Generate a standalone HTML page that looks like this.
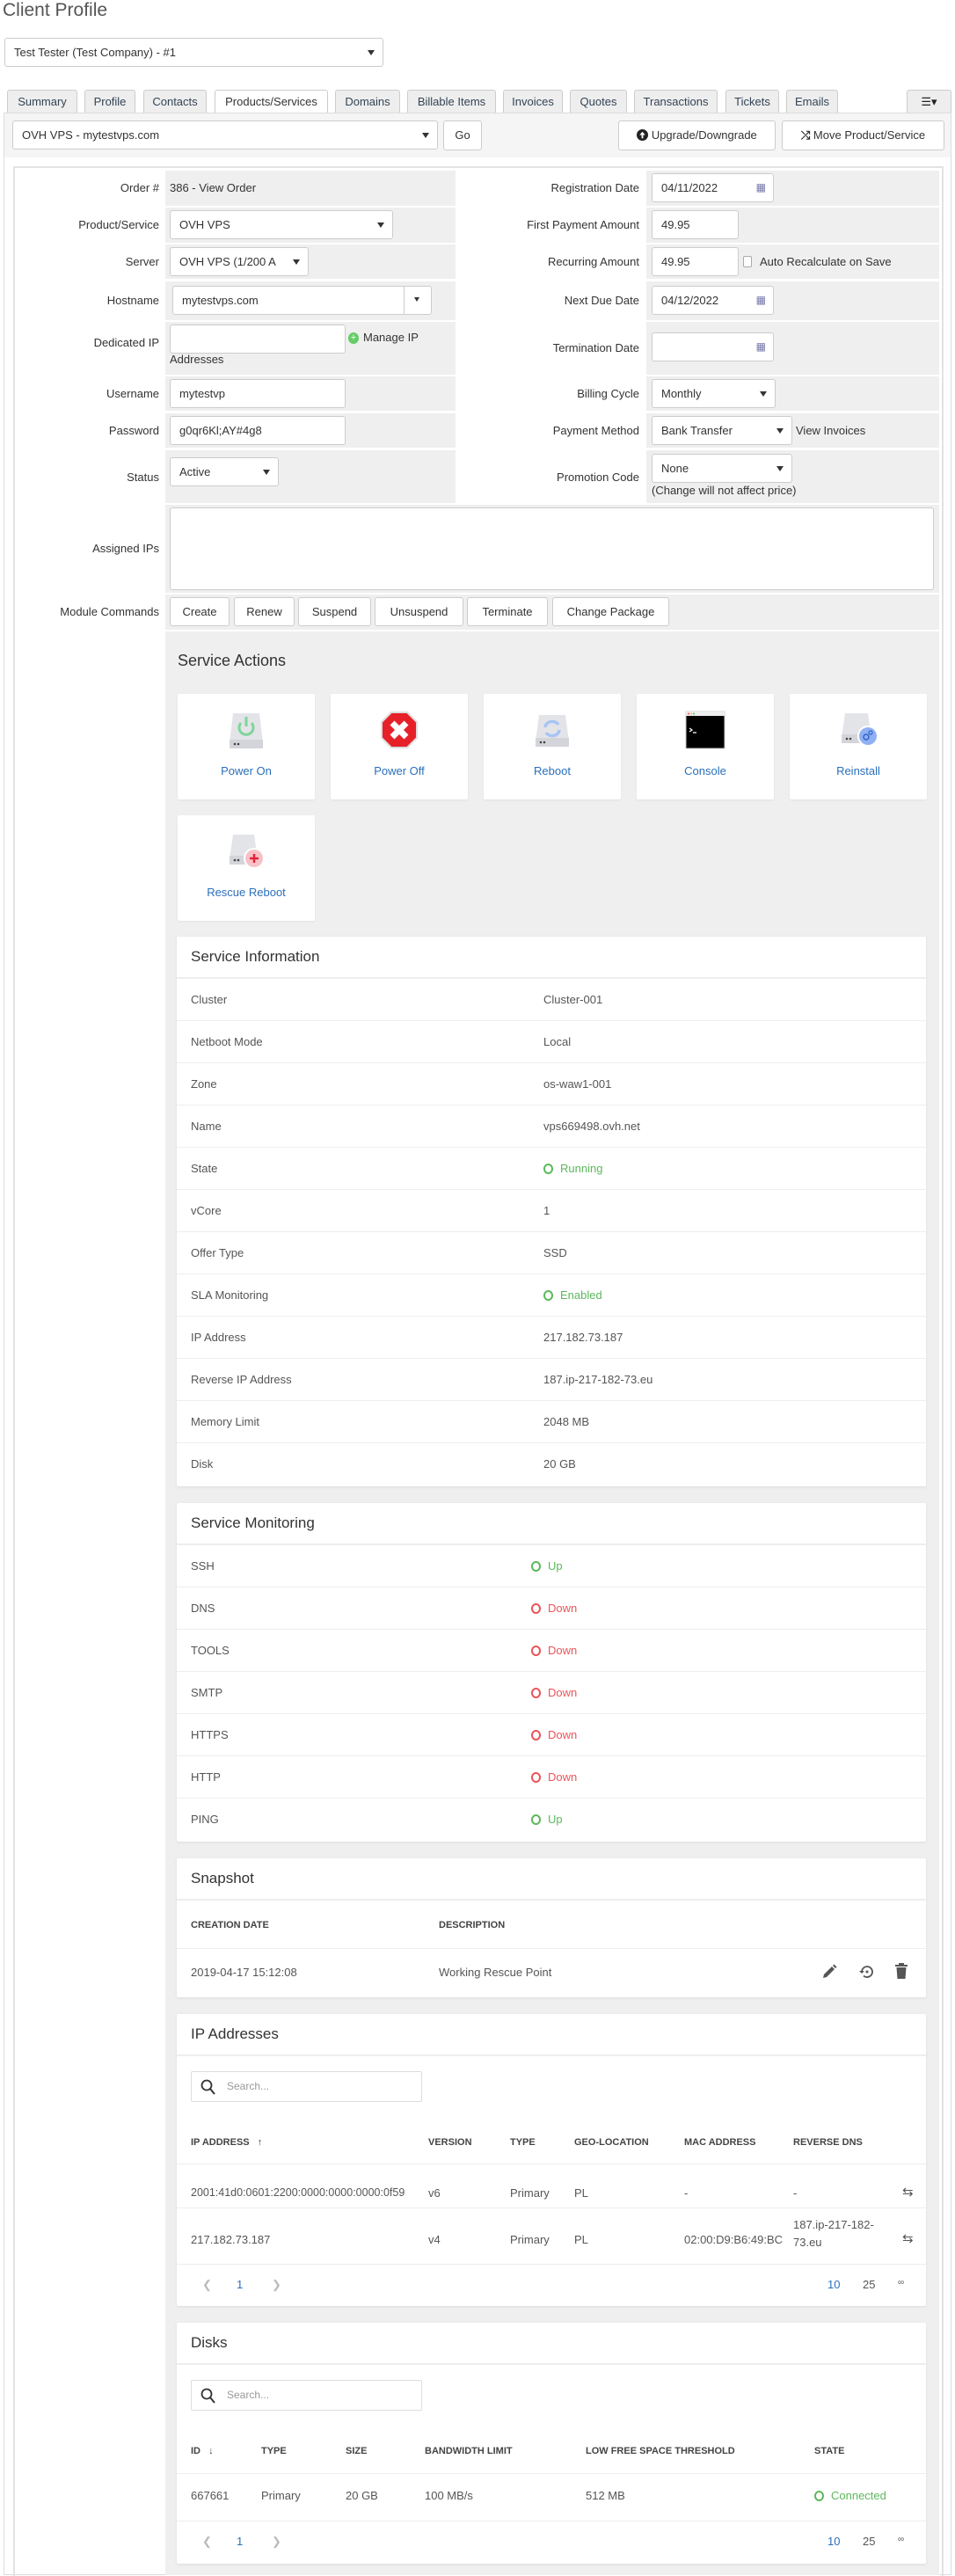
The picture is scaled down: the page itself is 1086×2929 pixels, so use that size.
<!DOCTYPE html>
<html><head><meta charset="utf-8">
<style>
*{box-sizing:border-box;margin:0;padding:0}
body{width:1086px;height:2923px;background:#fff;font-family:"Liberation Sans",sans-serif;font-size:13px;color:#333;position:relative;overflow:hidden}
.a{position:absolute}
.inp{position:absolute;background:#fff;border:1px solid #ccc;border-radius:3px;height:33px;padding:0 10px;line-height:31px;font-size:13px;color:#555;white-space:nowrap;overflow:hidden}
.sel::after{content:"";position:absolute;right:9px;top:13px;border-left:4px solid transparent;border-right:4px solid transparent;border-top:6px solid #333}
.tab{position:absolute;top:102px;height:26px;border:1px solid #ccc;border-bottom:none;border-radius:3px 3px 0 0;background:#eee;text-align:center;line-height:25px;font-size:13px;color:#345}
.lbl{position:absolute;text-align:right;width:170px;font-size:13px;color:#333}
.rl{position:absolute;text-align:right;width:200px;left:527px;font-size:13px;color:#333}
.cell{position:absolute;background:#efefef}
.btn{position:absolute;background:#fff;border:1px solid #ccc;border-radius:3px;height:34px;line-height:32px;text-align:center;font-size:13px;color:#333}
.card{position:absolute;background:#fff;box-shadow:0 1px 3px rgba(0,0,0,.08);border-radius:2px}
.act{position:absolute;top:789px;width:156px;height:120px;background:#fff;border-radius:2px;box-shadow:0 1px 2px rgba(0,0,0,.06);text-align:center}
.act span{position:absolute;left:0;right:0;top:80px;color:#2a6fba;font-size:13px}
.act svg{position:absolute;left:50%;top:18px;transform:translateX(-50%)}
.ph{height:48px;border-bottom:2px solid #eee;padding:0 16px;line-height:46px;font-size:17px;color:#333}
.row{height:48px;border-bottom:1px solid #eee;position:relative;font-size:13px;color:#555;line-height:48px}
.row:last-child{border-bottom:none}
.row b{font-weight:normal;position:absolute;left:16px}
.row i{font-style:normal;position:absolute}
.ok{color:#5cb85c}.bad{color:#e9545a}
.dot{display:inline-block;width:11px;height:12px;border:2px solid currentColor;border-radius:50%;vertical-align:-2px;margin-right:8px}
.th{font-size:11px;font-weight:bold;color:#444;position:absolute}
.srch{position:absolute;left:16px;width:263px;height:35px;border:1px solid #ddd;border-radius:2px;color:#999;font-size:12px;line-height:33px;padding-left:40px}
.pg{position:absolute;font-size:13px;color:#2a6fba}
</style></head><body>

<div class="a" style="left:3px;top:0;font-size:21px;color:#555">Client Profile</div>
<div class="inp sel" style="left:5px;top:43px;width:431px;height:33px;border-radius:3px;color:#333">Test Tester (Test Company) - #1</div>

<div class="tab" style="left:8px;width:80px">Summary</div>
<div class="tab" style="left:96px;width:58px">Profile</div>
<div class="tab" style="left:163px;width:72px">Contacts</div>
<div class="tab" style="left:244px;width:129px;background:#fff;height:27px;color:#333">Products/Services</div>
<div class="tab" style="left:381px;width:74px">Domains</div>
<div class="tab" style="left:463px;width:101px">Billable Items</div>
<div class="tab" style="left:572px;width:68px">Invoices</div>
<div class="tab" style="left:648px;width:65px">Quotes</div>
<div class="tab" style="left:721px;width:95px">Transactions</div>
<div class="tab" style="left:825px;width:61px">Tickets</div>
<div class="tab" style="left:894px;width:59px">Emails</div>
<div class="tab" style="left:1031px;width:51px;color:#222">&#9776;&#9662;</div>

<div class="a" style="left:4px;top:128px;width:1078px;height:2800px;border:1px solid #ddd;background:#fff"></div>
<div class="a" style="left:5px;top:129px;width:1076px;height:50px;background:#f5f5f5"></div>
<div class="inp sel" style="left:14px;top:137px;width:484px;color:#333">OVH VPS - mytestvps.com</div>
<div class="btn" style="left:504px;top:137px;width:44px">Go</div>
<div class="btn" style="left:703px;top:137px;width:179px"><svg width="13" height="13" viewBox="0 0 14 14" style="vertical-align:-2px"><circle cx="7" cy="7" r="7" fill="#222"/><path d="M7 3l3.5 4H8v4H6V7H3.5z" fill="#fff"/></svg> Upgrade/Downgrade</div>
<div class="btn" style="left:889px;top:137px;width:185px"><b style="font-size:13px">&#10542;</b> Move Product/Service</div>

<div class="a" style="left:15px;top:189px;width:1058px;height:2740px;border:2px solid #e3e3e3;border-bottom:none"></div>
<div class="a" style="left:188px;top:718px;width:880px;height:2210px;background:#efefef"></div>

<!-- form rows -->
<div class="cell" style="left:188px;top:194px;width:330px;height:40px"></div>
<div class="cell" style="left:735px;top:194px;width:333px;height:40px"></div>
<div class="cell" style="left:188px;top:236px;width:330px;height:40px"></div>
<div class="cell" style="left:735px;top:236px;width:333px;height:40px"></div>
<div class="cell" style="left:188px;top:278px;width:330px;height:39px"></div>
<div class="cell" style="left:735px;top:278px;width:333px;height:39px"></div>
<div class="cell" style="left:188px;top:320px;width:330px;height:44px"></div>
<div class="cell" style="left:735px;top:320px;width:333px;height:44px"></div>
<div class="cell" style="left:188px;top:366px;width:330px;height:60px"></div>
<div class="cell" style="left:735px;top:366px;width:333px;height:60px"></div>
<div class="cell" style="left:188px;top:428px;width:330px;height:39px"></div>
<div class="cell" style="left:735px;top:428px;width:333px;height:39px"></div>
<div class="cell" style="left:188px;top:470px;width:330px;height:39px"></div>
<div class="cell" style="left:735px;top:470px;width:333px;height:39px"></div>
<div class="cell" style="left:188px;top:512px;width:330px;height:60px"></div>
<div class="cell" style="left:735px;top:512px;width:333px;height:60px"></div>
<div class="cell" style="left:188px;top:574px;width:880px;height:100px"></div>
<div class="cell" style="left:188px;top:676px;width:880px;height:40px"></div>

<div class="lbl" style="left:11px;top:206px">Order #</div>
<div class="a" style="left:193px;top:206px;color:#333">386 - View Order</div>
<div class="rl" style="top:206px">Registration Date</div>
<div class="inp" style="left:741px;top:197px;width:139px;color:#333">04/11/2022<span style="position:absolute;right:8px;top:0;color:#77a;font-size:12px">&#9638;</span></div>

<div class="lbl" style="left:11px;top:248px">Product/Service</div>
<div class="inp sel" style="left:193px;top:239px;width:254px;color:#333">OVH VPS</div>
<div class="rl" style="top:248px">First Payment Amount</div>
<div class="inp" style="left:741px;top:239px;width:99px;color:#333">49.95</div>

<div class="lbl" style="left:11px;top:290px">Server</div>
<div class="inp sel" style="left:193px;top:281px;width:158px;color:#333">OVH VPS (1/200 A</div>
<div class="rl" style="top:290px">Recurring Amount</div>
<div class="inp" style="left:741px;top:281px;width:99px;color:#333">49.95</div>
<div class="a" style="left:845px;top:291px;width:10px;height:13px;border:1px solid #aaa;border-radius:2px;background:#fff"></div>
<div class="a" style="left:864px;top:290px">Auto Recalculate on Save</div>

<div class="lbl" style="left:11px;top:334px">Hostname</div>
<div class="inp" style="left:196px;top:325px;width:295px;color:#333">mytestvps.com</div>
<div class="a" style="left:459px;top:326px;width:1px;height:31px;background:#ccc"></div>
<div class="a" style="left:471px;top:338px;border-left:3px solid transparent;border-right:3px solid transparent;border-top:5px solid #333"></div>
<div class="rl" style="top:334px">Next Due Date</div>
<div class="inp" style="left:741px;top:325px;width:139px;color:#333">04/12/2022<span style="position:absolute;right:8px;top:0;color:#77a;font-size:12px">&#9638;</span></div>

<div class="lbl" style="left:11px;top:382px">Dedicated IP</div>
<div class="inp" style="left:193px;top:369px;width:200px"></div>
<div class="a" style="left:396px;top:378px;width:12px;height:13px;border-radius:50%;background:#6c6;color:#fff;font-size:11px;line-height:13px;text-align:center">+</div>
<div class="a" style="left:413px;top:376px">Manage IP</div>
<div class="a" style="left:193px;top:401px">Addresses</div>
<div class="rl" style="top:388px">Termination Date</div>
<div class="inp" style="left:741px;top:378px;width:139px"><span style="position:absolute;right:8px;top:0;color:#77a;font-size:12px">&#9638;</span></div>

<div class="lbl" style="left:11px;top:440px">Username</div>
<div class="inp" style="left:193px;top:431px;width:200px;color:#333">mytestvp</div>
<div class="rl" style="top:440px">Billing Cycle</div>
<div class="inp sel" style="left:741px;top:431px;width:141px;color:#333">Monthly</div>

<div class="lbl" style="left:11px;top:482px">Password</div>
<div class="inp" style="left:193px;top:473px;width:200px;color:#333">g0qr6Kl;AY#4g8</div>
<div class="rl" style="top:482px">Payment Method</div>
<div class="inp sel" style="left:741px;top:473px;width:160px;color:#333">Bank Transfer</div>
<div class="a" style="left:905px;top:482px">View Invoices</div>

<div class="lbl" style="left:11px;top:535px">Status</div>
<div class="inp sel" style="left:193px;top:520px;width:124px;color:#333">Active</div>
<div class="rl" style="top:535px">Promotion Code</div>
<div class="inp sel" style="left:741px;top:516px;width:160px;color:#333">None</div>
<div class="a" style="left:741px;top:550px;font-size:13px">(Change will not affect price)</div>

<div class="lbl" style="left:11px;top:616px">Assigned IPs</div>
<div class="inp" style="left:193px;top:577px;width:869px;height:94px"></div>

<div class="lbl" style="left:11px;top:688px">Module Commands</div>
<div class="btn" style="left:193px;top:679px;width:68px;height:33px">Create</div>
<div class="btn" style="left:266px;top:679px;width:69px;height:33px">Renew</div>
<div class="btn" style="left:339px;top:679px;width:83px;height:33px">Suspend</div>
<div class="btn" style="left:426px;top:679px;width:101px;height:33px">Unsuspend</div>
<div class="btn" style="left:531px;top:679px;width:92px;height:33px">Terminate</div>
<div class="btn" style="left:628px;top:679px;width:133px;height:33px">Change Package</div>

<div class="a" style="left:202px;top:741px;font-size:18px;color:#333">Service Actions</div>

<div class="act" style="left:202px"><svg width="46" height="46" viewBox="0 0 46 46"><path d="M8 4h30l4 34H4z" fill="#e3e4e8"/><rect x="4" y="34" width="38" height="10" fill="#d4d5da"/><circle cx="10" cy="39" r="1.3" fill="#444"/><circle cx="14" cy="39" r="1.3" fill="#444"/><path d="M17 15a8 8 0 1 0 12 0" stroke="#7dd59a" stroke-width="3" fill="none"/><path d="M23 8v11" stroke="#7dd59a" stroke-width="3"/></svg><span>Power On</span></div>
<div class="act" style="left:376px"><svg width="46" height="46" viewBox="0 0 46 46"><polygon points="14,3 32,3 43,14 43,32 32,43 14,43 3,32 3,14" fill="#e62129" stroke="#ddd" stroke-width="2"/><path d="M15 15l16 16M31 15L15 31" stroke="#fff" stroke-width="7"/></svg><span>Power Off</span></div>
<div class="act" style="left:550px"><svg width="46" height="46" viewBox="0 0 46 46"><path d="M8 6h30l4 30H4z" fill="#e3e4e8"/><rect x="4" y="32" width="38" height="10" fill="#d4d5da"/><circle cx="10" cy="37" r="1.3" fill="#444"/><circle cx="14" cy="37" r="1.3" fill="#444"/><path d="M15 20a8 7 0 0 1 15-3M31 23a8 7 0 0 1-15 3" stroke="#a9c4f5" stroke-width="3.5" fill="none"/></svg><span>Reboot</span></div>
<div class="act" style="left:724px"><svg width="46" height="46" viewBox="0 0 46 46"><rect x="1" y="2" width="44" height="42" fill="#000" stroke="#ccc"/><rect x="1" y="2" width="44" height="5" fill="#eee"/><circle cx="4" cy="4.5" r="1" fill="#e55"/><circle cx="7" cy="4.5" r="1" fill="#eb5"/><circle cx="10" cy="4.5" r="1" fill="#5b5"/><path d="M5 21l3 2-3 2M9 26h4" stroke="#fff" stroke-width="1.2" fill="none"/></svg><span>Console</span></div>
<div class="act" style="left:898px"><svg width="46" height="46" viewBox="0 0 46 46"><path d="M8 4h26l4 28H4z" fill="#e3e4e8"/><rect x="4" y="28" width="34" height="10" fill="#d4d5da"/><circle cx="10" cy="33" r="1.3" fill="#444"/><circle cx="14" cy="33" r="1.3" fill="#444"/><circle cx="34" cy="30" r="12" fill="#fff"/><circle cx="34" cy="30" r="10" fill="#8fb0f2"/><circle cx="32" cy="31" r="3" stroke="#3463cc" stroke-width="1.5" fill="none"/><circle cx="37" cy="26" r="2" stroke="#3463cc" stroke-width="1.2" fill="none"/></svg><span>Reinstall</span></div>
<div class="act" style="left:202px;top:927px"><svg width="46" height="46" viewBox="0 0 46 46"><path d="M8 4h24l4 28H4z" fill="#e3e4e8"/><rect x="4" y="28" width="32" height="10" fill="#d4d5da"/><circle cx="10" cy="33" r="1.3" fill="#444"/><circle cx="14" cy="33" r="1.3" fill="#444"/><circle cx="32" cy="31" r="12" fill="#fff"/><circle cx="32" cy="31" r="10" fill="#f6c2c8"/><path d="M32 26v10M27 31h10" stroke="#e2243b" stroke-width="2.5"/></svg><span>Rescue Reboot</span></div>

<!-- Service Information -->
<div class="card" style="left:201px;top:1065px;width:852px;height:625px">
<div class="ph">Service Information</div>
<div class="row"><b>Cluster</b><i style="left:417px">Cluster-001</i></div>
<div class="row"><b>Netboot Mode</b><i style="left:417px">Local</i></div>
<div class="row"><b>Zone</b><i style="left:417px">os-waw1-001</i></div>
<div class="row"><b>Name</b><i style="left:417px">vps669498.ovh.net</i></div>
<div class="row"><b>State</b><i style="left:417px" class="ok"><span class="dot"></span>Running</i></div>
<div class="row"><b>vCore</b><i style="left:417px">1</i></div>
<div class="row"><b>Offer Type</b><i style="left:417px">SSD</i></div>
<div class="row"><b>SLA Monitoring</b><i style="left:417px" class="ok"><span class="dot"></span>Enabled</i></div>
<div class="row"><b>IP Address</b><i style="left:417px">217.182.73.187</i></div>
<div class="row"><b>Reverse IP Address</b><i style="left:417px">187.ip-217-182-73.eu</i></div>
<div class="row"><b>Memory Limit</b><i style="left:417px">2048 MB</i></div>
<div class="row"><b>Disk</b><i style="left:417px">20 GB</i></div>
</div>

<!-- Monitoring -->
<div class="card" style="left:201px;top:1709px;width:852px;height:385px">
<div class="ph">Service Monitoring</div>
<div class="row"><b>SSH</b><i style="left:403px" class="ok"><span class="dot"></span>Up</i></div>
<div class="row"><b>DNS</b><i style="left:403px" class="bad"><span class="dot"></span>Down</i></div>
<div class="row"><b>TOOLS</b><i style="left:403px" class="bad"><span class="dot"></span>Down</i></div>
<div class="row"><b>SMTP</b><i style="left:403px" class="bad"><span class="dot"></span>Down</i></div>
<div class="row"><b>HTTPS</b><i style="left:403px" class="bad"><span class="dot"></span>Down</i></div>
<div class="row"><b>HTTP</b><i style="left:403px" class="bad"><span class="dot"></span>Down</i></div>
<div class="row"><b>PING</b><i style="left:403px" class="ok"><span class="dot"></span>Up</i></div>
</div>

<!-- Snapshot -->
<div class="card" style="left:201px;top:2113px;width:852px;height:158px">
<div class="ph">Snapshot</div>
<div class="a" style="left:0;top:49px;width:852px;height:54px;border-bottom:1px solid #eee"></div>
<div class="th" style="left:16px;top:70px">CREATION DATE</div>
<div class="th" style="left:298px;top:70px">DESCRIPTION</div>
<div class="a" style="left:16px;top:122px;color:#555">2019-04-17 15:12:08</div>
<div class="a" style="left:298px;top:122px;color:#555">Working Rescue Point</div>
<svg class="a" style="left:733px;top:120px" width="18" height="18" viewBox="0 0 18 18"><path d="M2 16l1-4 9-9 3 3-9 9z M13 2l1.5-1.5 3 3L16 5z" fill="#555"/></svg>
<svg class="a" style="left:774px;top:120px" width="20" height="18" viewBox="0 0 20 18"><path d="M5 9a6 6 0 1 1 2 4.5" stroke="#555" stroke-width="1.8" fill="none"/><path d="M2 8l3 3 3-3" fill="#555"/><circle cx="11" cy="9" r="1.5" fill="#555"/></svg>
<svg class="a" style="left:817px;top:119px" width="14" height="18" viewBox="0 0 14 18"><rect x="0" y="2" width="14" height="2" fill="#555"/><rect x="4" y="0" width="6" height="2" fill="#555"/><path d="M1.5 5h11l-1 13h-9z" fill="#555"/></svg>
</div>

<!-- IP Addresses -->
<div class="card" style="left:201px;top:2290px;width:852px;height:332px">
<div class="ph">IP Addresses</div>
<div class="srch" style="top:65px"><svg class="a" style="left:10px;top:8px" width="17" height="18" viewBox="0 0 17 18"><circle cx="7" cy="7" r="5.5" stroke="#333" stroke-width="1.8" fill="none"/><path d="M11 11l5 6" stroke="#333" stroke-width="2"/></svg>Search...</div>
<div class="a" style="left:0;top:170px;width:852px;height:1px;background:#eee"></div>
<div class="th" style="left:16px;top:140px">IP ADDRESS &nbsp;&nbsp;&#8593;</div>
<div class="th" style="left:286px;top:140px">VERSION</div>
<div class="th" style="left:379px;top:140px">TYPE</div>
<div class="th" style="left:452px;top:140px">GEO-LOCATION</div>
<div class="th" style="left:577px;top:140px">MAC ADDRESS</div>
<div class="th" style="left:701px;top:140px">REVERSE DNS</div>
<div class="a" style="left:0;top:220px;width:852px;height:1px;background:#eee"></div>
<div class="a" style="left:16px;top:196px;color:#555;font-size:12.5px">2001:41d0:0601:2200:0000:0000:0000:0f59</div>
<div class="a" style="left:286px;top:196px;color:#555">v6</div>
<div class="a" style="left:379px;top:196px;color:#555">Primary</div>
<div class="a" style="left:452px;top:196px;color:#555">PL</div>
<div class="a" style="left:577px;top:196px;color:#555">-</div>
<div class="a" style="left:701px;top:196px;color:#555">-</div>
<div class="a" style="left:825px;top:193px;color:#555;font-size:15px">&#8646;</div>
<div class="a" style="left:0;top:284px;width:852px;height:1px;background:#eee"></div>
<div class="a" style="left:16px;top:249px;color:#555">217.182.73.187</div>
<div class="a" style="left:286px;top:249px;color:#555">v4</div>
<div class="a" style="left:379px;top:249px;color:#555">Primary</div>
<div class="a" style="left:452px;top:249px;color:#555">PL</div>
<div class="a" style="left:577px;top:249px;color:#555">02:00:D9:B6:49:BC</div>
<div class="a" style="left:701px;top:230px;color:#555;line-height:20px">187.ip-217-182-<br>73.eu</div>
<div class="a" style="left:825px;top:246px;color:#555;font-size:15px">&#8646;</div>
<div class="pg" style="left:29px;top:300px;color:#bbb">&#10094;</div>
<div class="pg" style="left:68px;top:300px">1</div>
<div class="pg" style="left:108px;top:300px;color:#bbb">&#10095;</div>
<div class="pg" style="left:740px;top:300px">10</div>
<div class="pg" style="left:780px;top:300px;color:#555">25</div>
<div class="pg" style="left:820px;top:300px;color:#555;font-size:10px">&#8734;</div>
</div>

<!-- Disks -->
<div class="card" style="left:201px;top:2641px;width:852px;height:274px">
<div class="ph">Disks</div>
<div class="srch" style="top:65px"><svg class="a" style="left:10px;top:8px" width="17" height="18" viewBox="0 0 17 18"><circle cx="7" cy="7" r="5.5" stroke="#333" stroke-width="1.8" fill="none"/><path d="M11 11l5 6" stroke="#333" stroke-width="2"/></svg>Search...</div>
<div class="th" style="left:16px;top:140px">ID &nbsp;&nbsp;&#8595;</div>
<div class="th" style="left:96px;top:140px">TYPE</div>
<div class="th" style="left:192px;top:140px">SIZE</div>
<div class="th" style="left:282px;top:140px">BANDWIDTH LIMIT</div>
<div class="th" style="left:465px;top:140px">LOW FREE SPACE THRESHOLD</div>
<div class="th" style="left:725px;top:140px">STATE</div>
<div class="a" style="left:0;top:171px;width:852px;height:1px;background:#eee"></div>
<div class="a" style="left:16px;top:189px;color:#555">667661</div>
<div class="a" style="left:96px;top:189px;color:#555">Primary</div>
<div class="a" style="left:192px;top:189px;color:#555">20 GB</div>
<div class="a" style="left:282px;top:189px;color:#555">100 MB/s</div>
<div class="a" style="left:465px;top:189px;color:#555">512 MB</div>
<div class="a ok" style="left:725px;top:189px"><span class="dot"></span>Connected</div>
<div class="a" style="left:0;top:225px;width:852px;height:1px;background:#eee"></div>
<div class="pg" style="left:29px;top:241px;color:#bbb">&#10094;</div>
<div class="pg" style="left:68px;top:241px">1</div>
<div class="pg" style="left:108px;top:241px;color:#bbb">&#10095;</div>
<div class="pg" style="left:740px;top:241px">10</div>
<div class="pg" style="left:780px;top:241px;color:#555">25</div>
<div class="pg" style="left:820px;top:241px;color:#555;font-size:10px">&#8734;</div>
</div>

</body></html>
